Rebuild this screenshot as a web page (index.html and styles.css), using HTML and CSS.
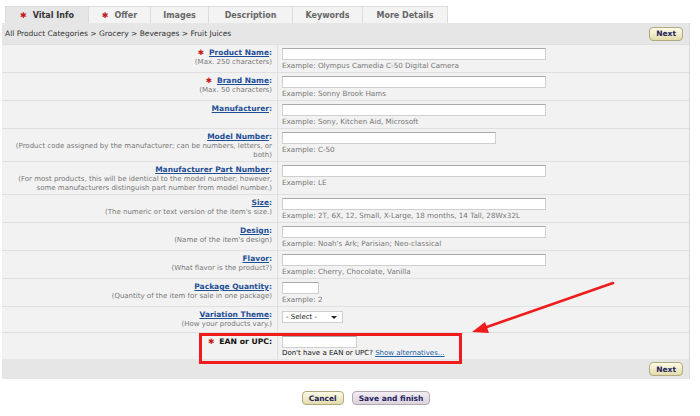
FILE: index.html
```html
<!DOCTYPE html>
<html>
<head>
<meta charset="utf-8">
<link rel="stylesheet" href="styles.css">
</head>
<body>
<div class="page">
  <div class="tabs">
    <div class="tab active"><span class="star">✱</span>Vital Info</div>
    <div class="tab"><span class="star">✱</span>Offer</div>
    <div class="tab">Images</div>
    <div class="tab">Description</div>
    <div class="tab">Keywords</div>
    <div class="tab">More Details</div>
  </div>
  <div class="panel">
    <div class="bar">
      <span class="crumbs">All Product Categories &gt; Grocery &gt; Beverages &gt; Fruit Juices</span>
      <button class="btn btn-next">Next</button>
    </div>

    <div class="row">
      <div class="lbl"><span class="star">✱</span><a class="name">Product Name</a>:<div class="help">(Max. 250 characters)</div></div>
      <div class="fld"><div class="inp inp-wide"></div><div class="ex">Example: Olympus Camedia C-50 Digital Camera</div></div>
    </div>
    <div class="row">
      <div class="lbl"><span class="star">✱</span><a class="name">Brand Name</a>:<div class="help">(Max. 50 characters)</div></div>
      <div class="fld"><div class="inp inp-wide"></div><div class="ex">Example: Sonny Brook Hams</div></div>
    </div>
    <div class="row">
      <div class="lbl"><a class="name">Manufacturer</a>:</div>
      <div class="fld"><div class="inp inp-wide"></div><div class="ex">Example: Sony, Kitchen Aid, Microsoft</div></div>
    </div>
    <div class="row">
      <div class="lbl"><a class="name">Model Number</a>:<div class="help">(Product code assigned by the manufacturer; can be numbers, letters, or<br>both)</div></div>
      <div class="fld"><div class="inp inp-mid"></div><div class="ex">Example: C-50</div></div>
    </div>
    <div class="row">
      <div class="lbl"><a class="name">Manufacturer Part Number</a>:<div class="help">(For most products, this will be identical to the model number; however,<br>some manufacturers distinguish part number from model number.)</div></div>
      <div class="fld"><div class="inp inp-wide"></div><div class="ex">Example: LE</div></div>
    </div>
    <div class="row">
      <div class="lbl"><a class="name">Size</a>:<div class="help">(The numeric or text version of the item's size.)</div></div>
      <div class="fld"><div class="inp inp-wide"></div><div class="ex">Example: 2T, 6X, 12, Small, X-Large, 18 months, 14 Tall, 28Wx32L</div></div>
    </div>
    <div class="row">
      <div class="lbl"><a class="name">Design</a>:<div class="help">(Name of the item's design)</div></div>
      <div class="fld"><div class="inp inp-wide"></div><div class="ex">Example: Noah's Ark; Parisian; Neo-classical</div></div>
    </div>
    <div class="row">
      <div class="lbl"><a class="name">Flavor</a>:<div class="help">(What flavor is the product?)</div></div>
      <div class="fld"><div class="inp inp-wide"></div><div class="ex">Example: Cherry, Chocolate, Vanilla</div></div>
    </div>
    <div class="row">
      <div class="lbl"><a class="name">Package Quantity</a>:<div class="help">(Quantity of the item for sale in one package)</div></div>
      <div class="fld"><div class="inp inp-small"></div><div class="ex">Example: 2</div></div>
    </div>
    <div class="row row-var">
      <div class="lbl"><a class="name">Variation Theme</a>:<div class="help">(How your products vary.)</div></div>
      <div class="fld"><div class="select"><span>- Select -</span><span class="caret"></span></div></div>
    </div>
    <div class="row row-ean">
      <div class="lbl"><span class="star">✱</span><span class="plain">EAN or UPC:</span></div>
      <div class="fld"><div class="inp inp-ean"></div><div class="note">Don't have a EAN or UPC? <a class="alt">Show alternatives...</a></div></div>
    </div>

    <div class="bar bar-foot">
      <button class="btn btn-next">Next</button>
    </div>
  </div>
  <div class="actions">
    <button class="btn">Cancel</button>
    <button class="btn btn-save">Save and finish</button>
  </div>

  <div class="callout"></div>
  <svg class="arrow" width="700" height="416" viewBox="0 0 700 416">
    <line x1="613" y1="283" x2="484" y2="328" stroke="#ee1c1c" stroke-width="2.6" stroke-linecap="round"/>
    <polygon points="472,332 485,322 489,333" fill="#ee1c1c"/>
  </svg>
</div>
</body>
</html>
```
FILE: styles.css
```css
* { box-sizing: border-box; }
body {
  margin: 0;
  background: #fff;
  font-family: "DejaVu Sans", Verdana, sans-serif;
  color: #333;
}
.page {
  position: relative;
  width: 700px;
  height: 416px;
  padding: 6px 0 0 2px;
}
.tabs {
  display: flex;
  height: 17px;
  padding-left: 3px;
}
.tab {
  display: flex;
  align-items: center;
  justify-content: center;
  gap: 6px;
  font-size: 8px;
  font-weight: bold;
  color: #666;
  background: #f3f3f3;
  border: 1px solid #dcdcdc;
  border-bottom: none;
  margin-right: -1px;
}
.tab:nth-child(1) { width: 84px; }
.tab:nth-child(2) { width: 63px; }
.tab:nth-child(3) { width: 59px; }
.tab:nth-child(4) { width: 85px; }
.tab:nth-child(5) { width: 71px; }
.tab:nth-child(6) { width: 86px; }
.tab.active {
  background: #e6e6e6;
  color: #333;
}
.star {
  color: #c41a1a;
  font-weight: bold;
}
.panel {
  width: 688px;
  border-right: 1px solid #d8d8d8;
}
.bar {
  display: flex;
  align-items: center;
  justify-content: space-between;
  height: 21px;
  padding: 0 6px 0 3px;
  background: #e6e6e6;
}
.bar-foot {
  justify-content: flex-end;
  height: 20px;
}
.crumbs {
  font-size: 7.5px;
  color: #333;
}
.btn {
  font-family: "DejaVu Sans", Verdana, sans-serif;
  font-size: 7.5px;
  font-weight: bold;
  color: #23235e;
  height: 14px;
  padding: 0 6px;
  border: 1px solid #b1aa80;
  border-radius: 4px;
  background: linear-gradient(#fdfbe6, #e4dcab);
}
.row {
  display: grid;
  grid-template-columns: 276px 1fr;
  background: #f2f2f2;
  border-top: 1px solid #e0e0e0;
}
.lbl {
  text-align: right;
  padding: 3px 5px 2px 4px;
  border-right: 1px solid #e0e0e0;
  font-size: 7.5px;
  font-weight: bold;
  color: #1d4e96;
  line-height: 10px;
}
.lbl .star { margin-right: 5px; }
.name {
  color: #1d4e96;
  text-decoration: underline;
}
.help {
  font-size: 7px;
  font-weight: normal;
  color: #777;
  line-height: 8.5px;
}
.plain {
  color: #111;
}
.fld {
  padding: 3px 4px 2px 4px;
}
.inp {
  height: 12px;
  background: #fff;
  border: 1px solid #cfcfcf;
  border-top-color: #a9a9a9;
}
.inp-wide { width: 264px; }
.inp-mid { width: 214px; }
.inp-small { width: 37px; }
.inp-ean { width: 75px; }
.ex {
  margin-top: 1px;
  font-size: 7.2px;
  color: #777;
  line-height: 9px;
}
.row-var {
  min-height: 26px;
}
.select {
  display: flex;
  align-items: center;
  justify-content: space-between;
  width: 61px;
  height: 12px;
  padding: 0 5px 0 3px;
  margin-top: 1px;
  background: #fff;
  border: 1px solid #cfcfcf;
  font-size: 7px;
  color: #222;
}
.caret {
  width: 0;
  height: 0;
  border-left: 3px solid transparent;
  border-right: 3px solid transparent;
  border-top: 3px solid #222;
}
.row-ean .lbl {
  font-size: 7.7px;
  padding-top: 4px;
}
.row-ean .fld {
  padding-bottom: 1px;
}
.note {
  margin-top: 1px;
  font-size: 7px;
  color: #111;
  line-height: 9px;
}
.alt {
  color: #1d5fa6;
  text-decoration: underline;
}
.actions {
  display: flex;
  justify-content: center;
  gap: 8px;
  margin-top: 12px;
  padding-left: 30px;
}
.btn-save {
  background: linear-gradient(#f3eef3, #dcd2dc);
  border-color: #b3a9b3;
}
.callout {
  position: absolute;
  left: 199px;
  top: 333px;
  width: 263px;
  height: 31px;
  border: 3px solid #ee1c1c;
}
.arrow {
  position: absolute;
  left: 0;
  top: 0;
}
```
